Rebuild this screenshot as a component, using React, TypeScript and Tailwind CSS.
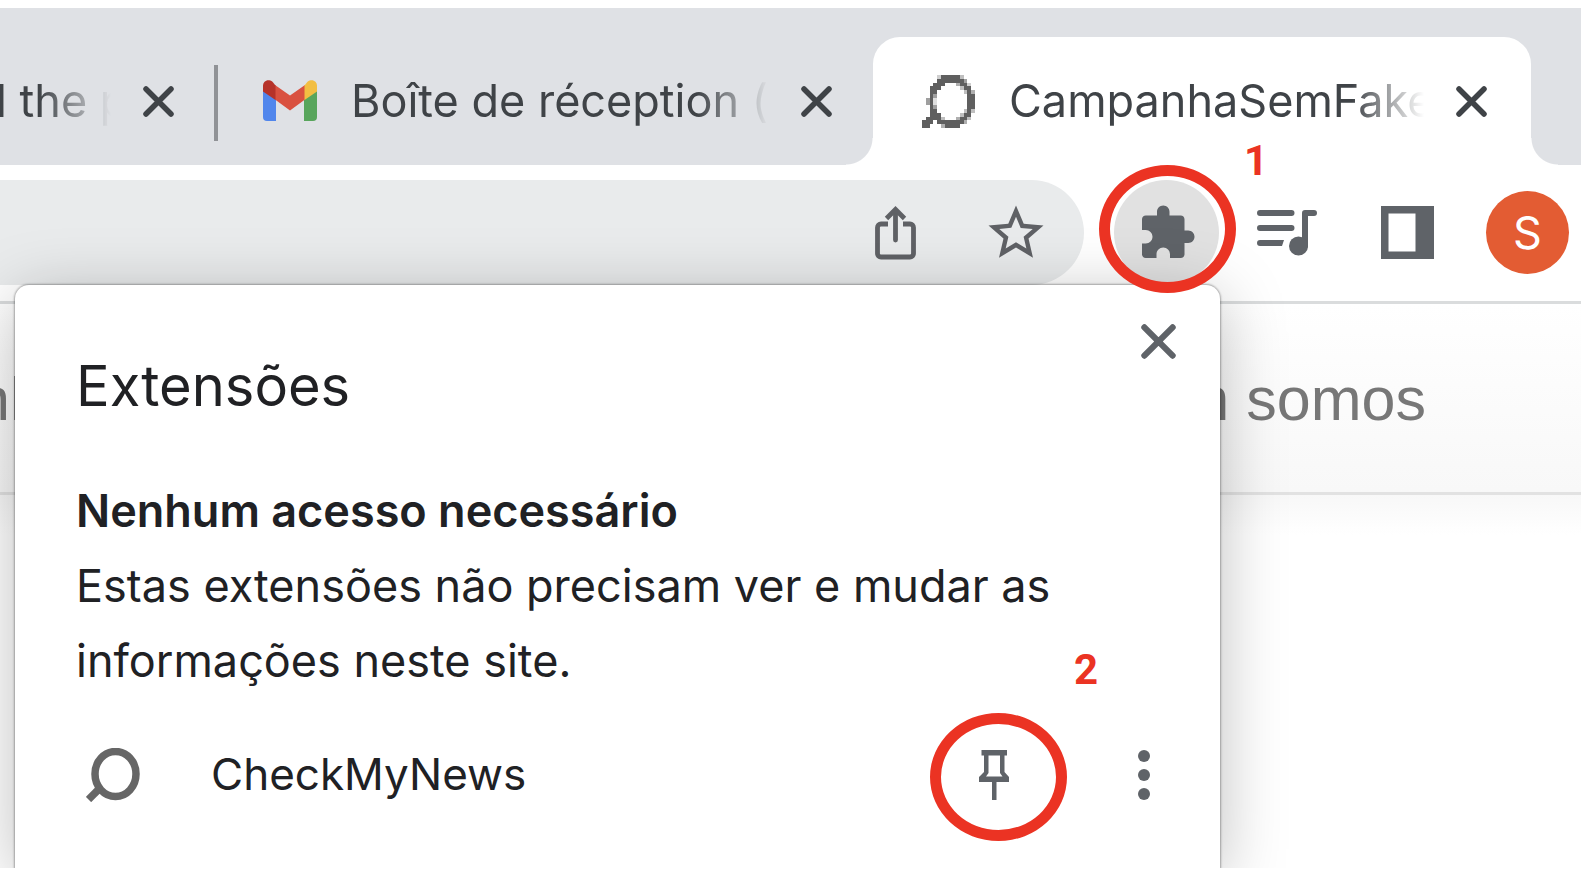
import type { ReactNode } from "react";

function CloseIcon({ className }: { className: string }) {
  return (
    <svg viewBox="0 0 31 31" className={className} fill="none" stroke="currentColor" strokeWidth="5.5" strokeLinecap="round" aria-hidden="true">
      <path d="M3 3L28 28M28 3L3 28" />
    </svg>
  );
}

function GmailIcon() {
  return (
    <svg viewBox="0 0 54 41" className="mb-0.5 h-[41px] w-[54px] shrink-0" aria-hidden="true">
      <path d="M0 10L13 18V41H4a4 4 0 0 1-4-4Z" fill="#5186ec" />
      <path d="M54 10L41 18V41H50a4 4 0 0 0 4-4Z" fill="#58a55c" />
      <path d="M12 5L27 15.500L42 5V19.500L27 30.500L12 19.500Z" fill="#d95140" />
      <path d="M0 11.500V6C0 1 5 -1.500 9.500 1.800L12.500 5.500V20Z" fill="#b63229" />
      <path d="M54 11.500V6C54 1 49 -1.500 44.500 1.800L41.500 5.500V20Z" fill="#f2be42" />
    </svg>
  );
}

// Each entry is a horizontal run of pixels: row, first column, length, opacity.
const faviconRuns: [number, number, number, number][] = [
  [0, 4, 1, 0.3], [0, 5, 5, 1], [0, 10, 1, 0.4],
  [1, 4, 7, 1], [1, 11, 1, 0.6],
  [2, 3, 3, 1], [2, 9, 1, 0.5], [2, 10, 2, 1], [2, 12, 1, 0.3],
  [3, 2, 3, 1], [3, 10, 1, 0.4], [3, 11, 2, 1],
  [4, 2, 2, 1], [4, 11, 1, 0.4], [4, 12, 1, 1], [4, 13, 1, 0.5],
  [5, 2, 1, 1], [5, 3, 1, 0.6], [5, 12, 2, 1],
  [6, 1, 1, 0.6], [6, 2, 1, 1], [6, 3, 1, 0.2], [6, 12, 2, 1],
  [7, 1, 1, 0.6], [7, 2, 1, 1], [7, 3, 1, 0.2], [7, 12, 2, 1],
  [8, 2, 1, 1], [8, 3, 1, 0.6], [8, 12, 2, 1],
  [9, 2, 2, 1], [9, 11, 1, 0.4], [9, 12, 1, 1], [9, 13, 1, 0.4],
  [10, 2, 3, 1], [10, 10, 1, 0.4], [10, 11, 2, 1],
  [11, 1, 4, 1], [11, 5, 1, 0.4], [11, 9, 1, 0.5], [11, 10, 2, 1], [11, 12, 1, 0.4],
  [12, 0, 3, 1], [12, 4, 7, 1], [12, 11, 1, 0.5],
  [13, 0, 2, 1], [13, 5, 1, 0.5], [13, 6, 4, 1],
];

function PixelFavicon() {
  return (
    <svg viewBox="0 0 14 14" className="size-[53px] shrink-0" fill="#5f5f5f" shapeRendering="crispEdges" aria-hidden="true">
      {faviconRuns.map(([row, col, length, opacity]) => (
        <rect key={`${row}-${col}`} x={col} y={row} width={length} height={1} opacity={opacity} />
      ))}
    </svg>
  );
}

function ShareIcon() {
  return (
    <svg viewBox="0 0 41 54" className="h-[54px] w-[41px]" fill="none" stroke="#5f6165" strokeWidth="4.800" aria-hidden="true">
      <path d="M13 18H6a3.500 3.500 0 0 0-3.500 3.500V47.500A3.500 3.500 0 0 0 6 51H35a3.500 3.500 0 0 0 3.500-3.500V21.500A3.500 3.500 0 0 0 35 18H28" />
      <path d="M20.500 34V5" strokeLinecap="round" />
      <path d="M11.500 12.500L20.500 3.500L29.500 12.500" />
    </svg>
  );
}

function StarIcon() {
  return (
    <svg viewBox="0 0 24 24" className="size-[66px]" fill="#5f6165" aria-hidden="true">
      <path d="M22 9.240l-7.190-.62L12 2 9.190 8.630 2 9.240l5.460 4.730L5.820 21 12 17.270 18.180 21l-1.630-7.030L22 9.240zM12 15.400l-3.760 2.270 1-4.280-3.320-2.880 4.380-.38L12 6.100l1.710 4.040 4.380.38-3.320 2.880 1 4.280L12 15.400z" />
    </svg>
  );
}

function PuzzleIcon() {
  return (
    <svg viewBox="0 0 24 24" className="size-[60px]" fill="#5f6368" aria-hidden="true">
      <path d="M20.500 11H19V6.500c0-.83-.67-1.500-1.500-1.500H13V3.500C13 2.120 11.880 1 10.500 1S8 2.120 8 3.500V5H3.500C2.670 5 2 5.670 2 6.500v4.300h1.500c1.490 0 2.700 1.210 2.700 2.700s-1.210 2.700-2.700 2.700H2v4.300c0 .83.67 1.500 1.500 1.500h4.300v-1.500c0-1.490 1.210-2.700 2.700-2.700s2.700 1.210 2.700 2.700V22h4.300c.83 0 1.500-.67 1.500-1.500V16h1.500c1.380 0 2.500-1.120 2.500-2.500S21.880 11 20.500 11z" />
    </svg>
  );
}

function QueueMusicIcon() {
  return (
    <svg viewBox="0 0 60 46" className="h-[46px] w-[60px]" fill="none" stroke="#5f6368" strokeWidth="6" strokeLinecap="round" aria-hidden="true">
      <path d="M3 3H34.500M3 18H34.500M3 33H22" />
      <path d="M20 30H27L25 36H20Z" fill="#5f6368" stroke="none" />
      <path d="M57 3H48V36" strokeLinejoin="round" />
      <circle cx="41.500" cy="36" r="9.500" fill="#5f6368" stroke="none" />
    </svg>
  );
}

function SidePanelIcon() {
  return (
    <svg viewBox="0 0 53 53" className="size-[53px]" aria-hidden="true">
      <path d="M0 0H53V53H0ZM7.500 7.500V45.500H34.500V7.500Z" fill="#5f6368" fillRule="evenodd" />
    </svg>
  );
}

function CheckMyNewsIcon() {
  return (
    <svg viewBox="0 0 54 54" className="size-[54px] shrink-0" fill="none" stroke="#666666" strokeWidth="7.500" aria-hidden="true">
      <ellipse cx="29.500" cy="26" rx="20.500" ry="22.500" />
      <path d="M2.500 51.500L14 40" />
    </svg>
  );
}

function PinIcon() {
  return (
    <svg viewBox="0 0 30 50" className="h-[50px] w-[30px]" fill="#5f6368" fillRule="evenodd" aria-hidden="true">
      <path d="M2.500 0H28V5.500H25.500V22L30 27V32H17.500V50H13V32H0V27L5 22V5.500H2.500ZM9.500 5.500V23L7 26.500H23.500L21 23V5.500Z" />
    </svg>
  );
}

function MoreIcon() {
  return (
    <svg viewBox="0 0 12 50" className="h-[50px] w-[12px]" fill="#5f6368" aria-hidden="true">
      <circle cx="6" cy="6" r="6" />
      <circle cx="6" cy="25" r="6" />
      <circle cx="6" cy="44" r="6" />
    </svg>
  );
}

function TabClose() {
  return (
    <button type="button" aria-label="Fechar guia" className="shrink-0 text-[#3f4347]">
      <CloseIcon className="size-[31px]" />
    </button>
  );
}

function TabTitle({ children }: { children: ReactNode }) {
  return (
    <span className="min-w-0 flex-1 overflow-hidden whitespace-nowrap text-[45px] leading-[60px] text-[#3f4347] [mask-image:linear-gradient(to_right,#000_calc(100%_-_72px),transparent)]">
      {children}
    </span>
  );
}

function TabStrip() {
  return (
    <div role="tablist" className="flex h-[157px] items-end bg-[#dfe1e5]">
      <div role="tab" className="flex h-32 w-[174px] shrink-0 items-center gap-8">
        <div className="-ml-1 flex min-w-0 flex-1">
          <TabTitle>l the p</TabTitle>
        </div>
        <TabClose />
      </div>
      <div className="flex h-32 w-[84px] shrink-0 items-center justify-center pt-1">
        <div className="h-[76px] w-1 bg-[#909296]" />
      </div>
      <div role="tab" className="flex h-32 min-w-0 flex-1 items-center pl-[5px] pr-[41px]">
        <GmailIcon />
        <div className="ml-[34px] mr-8 flex min-w-0 flex-1">
          <TabTitle>Boîte de réception (</TabTitle>
        </div>
        <TabClose />
      </div>
      <div
        role="tab"
        aria-selected="true"
        className="relative flex h-32 w-[658px] shrink-0 items-center rounded-t-[27px] bg-white pl-[49px] pr-11 before:absolute before:-left-[27px] before:bottom-0 before:size-[27px] before:bg-[radial-gradient(circle_at_0_0,transparent_26px,#fff_27px)] after:absolute after:-right-[27px] after:bottom-0 after:size-[27px] after:bg-[radial-gradient(circle_at_100%_0,transparent_26px,#fff_27px)]"
      >
        <PixelFavicon />
        <div className="ml-[34px] mr-8 flex min-w-0 flex-1">
          <TabTitle>CampanhaSemFake</TabTitle>
        </div>
        <TabClose />
      </div>
      <div className="w-[50px] shrink-0" />
    </div>
  );
}

function Highlight({ className }: { className: string }) {
  return <span className={`pointer-events-none absolute z-20 h-32 w-[137px] rounded-[50%] border-[11px] border-[#eb3323] ${className}`} />;
}

function StepNumber({ className, children }: { className: string; children: ReactNode }) {
  return (
    <span className={`pointer-events-none absolute z-20 font-[Roboto,sans-serif] text-[42px] font-bold leading-[42px] text-[#eb3323] ${className}`}>
      {children}
    </span>
  );
}

function Toolbar() {
  return (
    <div className="flex items-start border-b-[3px] border-[#dadcdd] bg-white pb-4 pr-3 pt-[15px]">
      <div className="flex h-[105px] min-w-0 flex-1 items-center justify-end gap-[67px] rounded-r-full bg-[#e9ebec] pr-[35px]">
        <button type="button" aria-label="Compartilhar">
          <ShareIcon />
        </button>
        <button type="button" aria-label="Adicionar aos favoritos">
          <StarIcon />
        </button>
      </div>
      <div className="relative ml-[30px] shrink-0">
        <button type="button" aria-label="Extensões" className="flex size-[105px] items-center justify-center rounded-full bg-[#e1e1e1]">
          <PuzzleIcon />
        </button>
        <Highlight className="-left-[15px] -top-[15px]" />
        <StepNumber className="-top-10 left-[130px]">1</StepNumber>
      </div>
      <div className="ml-[38px] flex h-[105px] shrink-0 items-center">
        <button type="button" aria-label="Controles de mídia">
          <QueueMusicIcon />
        </button>
        <button type="button" aria-label="Painel lateral" className="ml-16">
          <SidePanelIcon />
        </button>
        <button type="button" aria-label="Perfil" className="ml-[52px] size-[83px] rounded-full bg-[#e35c33] text-[45px] leading-[83px] text-white">
          S
        </button>
      </div>
    </div>
  );
}

function SiteHeader() {
  return (
    <nav className="flex h-[191px] items-center justify-between overflow-hidden border-b-[3px] border-[#e2e2e2] bg-linear-to-b from-white to-[#f8f8f8] pr-[155px] pt-0.5 font-['Liberation_Sans',sans-serif] text-[61px] leading-[70px] text-[#777777]">
      <a href="#campanha" className="-ml-6">nh</a>
      <a href="#quem-somos">Quem somos</a>
    </nav>
  );
}

function ExtensionsPopup() {
  return (
    <section
      aria-label="Extensões"
      className="absolute bottom-0 left-[15px] right-[361px] top-[277px] z-10 rounded-t-[14px] bg-white pl-[61px] pt-[39px] text-[45px] leading-[75px] text-[#202124] shadow-[0_0_2px_1px_rgba(0,0,0,0.3),0_12px_66px_rgba(0,0,0,0.26)]"
    >
      <div className="flex items-start justify-between pr-11">
        <h1 className="mt-7 text-[56px] leading-[68px]">Extensões</h1>
        <button type="button" aria-label="Fechar" className="text-[#5f6368]">
          <CloseIcon className="size-[35px]" />
        </button>
      </div>
      <h2 className="mt-[53px] font-semibold">Nenhum acesso necessário</h2>
      <p className="pr-40">Estas extensões não precisam ver e mudar as informações neste site.</p>
      <div className="mt-[39px] flex items-center pl-2.5 pr-[70px]">
        <CheckMyNewsIcon />
        <span className="ml-[71px] flex-1 text-[44px]">CheckMyNews</span>
        <div className="relative">
          <button type="button" aria-label="Fixar extensão" className="block">
            <PinIcon />
          </button>
          <Highlight className="-left-[49px] -top-[37px]" />
          <StepNumber className="-top-[101px] left-[95px]">2</StepNumber>
        </div>
        <button type="button" aria-label="Mais opções" className="ml-[129px]">
          <MoreIcon />
        </button>
      </div>
    </section>
  );
}

export default function App() {
  return (
    <div className="h-screen min-h-[876px] bg-white pb-2 pr-[5px] pt-2 font-[Inter,sans-serif]">
      <main className="relative h-full overflow-hidden">
        <TabStrip />
        <Toolbar />
        <SiteHeader />
        <div className="h-10 bg-linear-to-b from-[#f8f8f8] to-white" />
        <ExtensionsPopup />
      </main>
    </div>
  );
}
